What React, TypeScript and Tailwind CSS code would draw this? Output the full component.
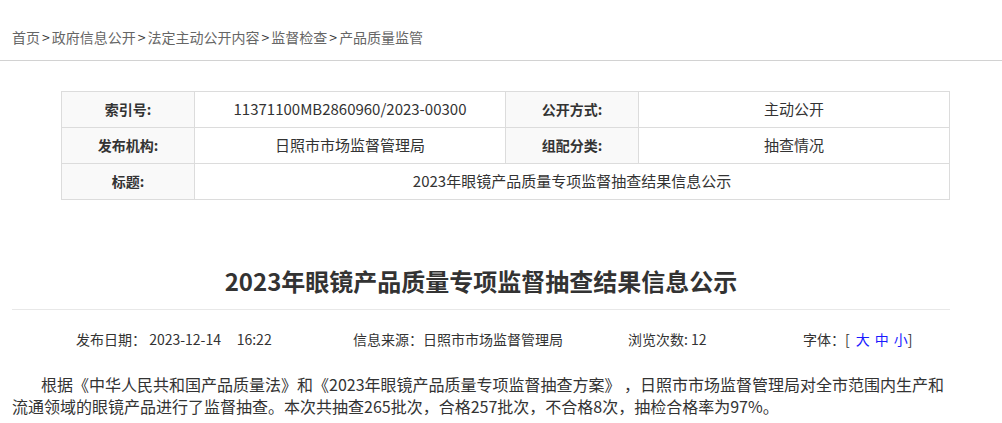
const crumbs = ['首页', '政府信息公开', '法定主动公开内容', '监督检查', '产品质量监管'];

function Label({ children }: { children: React.ReactNode }) {
  return (
    <div className="h-[36px] border-r border-b border-[#dcdcdc] bg-[#f9f9f9] flex items-center justify-center font-bold text-[14px] text-[#333]">
      {children}
    </div>
  );
}

function Value({ children, wide }: { children: React.ReactNode; wide?: boolean }) {
  return (
    <div
      className={
        'h-[36px] border-r border-b border-[#dcdcdc] flex items-center justify-center text-[15px] text-[#333] ' +
        (wide ? 'col-span-3' : '')
      }
    >
      {children}
    </div>
  );
}

export default function App() {
  return (
    <div className="min-h-screen bg-white font-['Microsoft_YaHei','Noto_Sans_CJK_SC',sans-serif] text-[#333]">
      {/* breadcrumb */}
      <div className="h-[61px] border-b border-[#d2d2d2] pt-[27px] pl-[12px] text-[14px] leading-[20px] text-[#666]">
        {crumbs.map((c, i) => (
          <span key={c}>
            {i > 0 && <span className="text-[#333] mx-[2px]">&gt;</span>}
            {c}
          </span>
        ))}
      </div>

      <div className="w-[938px] ml-[12px]">
        {/* info table */}
        <div className="ml-[49px] mt-[30px] w-[889px] grid grid-cols-[133px_311px_133px_311px] border-l border-t border-[#dcdcdc]">
          <Label>索引号:</Label>
          <Value>11371100MB2860960/2023-00300</Value>
          <Label>公开方式:</Label>
          <Value>主动公开</Value>
          <Label>发布机构:</Label>
          <Value>日照市市场监督管理局</Value>
          <Label>组配分类:</Label>
          <Value>抽查情况</Value>
          <Label>标题:</Label>
          <Value wide>2023年眼镜产品质量专项监督抽查结果信息公示</Value>
        </div>

        {/* title */}
        <h1 className="mt-[61px] pb-[8px] border-b border-[#e8e8e8] text-center text-[24px] leading-[40px] font-bold text-[#333]">
          2023年眼镜产品质量专项监督抽查结果信息公示
        </h1>

        {/* meta */}
        <div className="mt-[19px] flex pl-[64px] text-[14px] leading-[20px] text-[#333]">
          <div className="w-[277px]">发布日期： 2023-12-14&nbsp;&nbsp;&nbsp;&nbsp;&nbsp;16:22</div>
          <div className="w-[275px]">信息来源：日照市市场监督管理局</div>
          <div className="w-[175px]">浏览次数: 12</div>
          <div>
            字体：[<span className="ml-[6px] text-[#1a1aff]">大</span>
            <span className="ml-[5px] text-[#1a1aff]">中</span>
            <span className="ml-[5px] text-[#1a1aff]">小</span>]
          </div>
        </div>

        {/* body */}
        <p className="mt-[24px] text-[16px] leading-[22px] indent-[29px] text-[#333]">
          根据《中华人民共和国产品质量法》和《2023年眼镜产品质量专项监督抽查方案》 ，日照市市场监督管理局对全市范围内生产和
          <br />
          流通领域的眼镜产品进行了监督抽查。本次共抽查265批次，合格257批次，不合格8次，抽检合格率为97%。
        </p>
      </div>
    </div>
  );
}
